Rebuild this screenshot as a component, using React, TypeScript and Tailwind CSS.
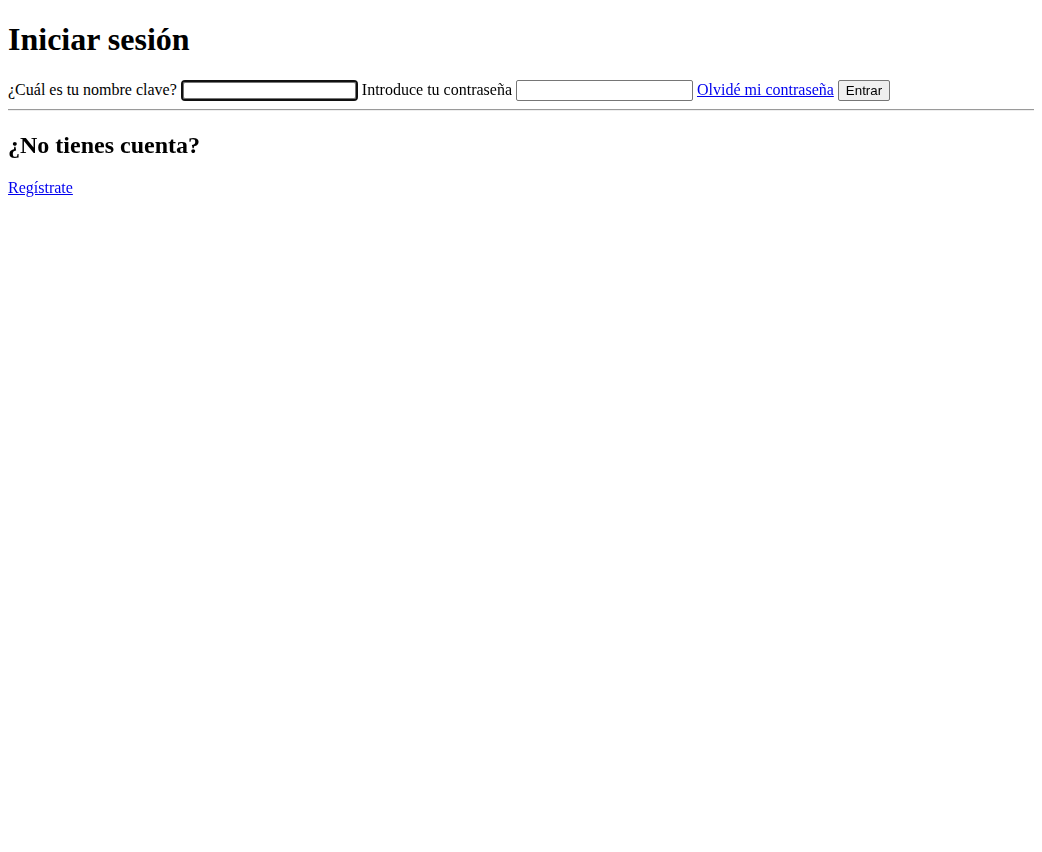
import { useEffect, useRef } from "react";

export default function App() {
  const nameRef = useRef<HTMLInputElement>(null);

  useEffect(() => {
    nameRef.current?.focus();
  }, []);

  return (
    <div className="p-2 font-['Liberation_Serif',serif] text-base leading-[normal] text-black bg-white min-h-screen">
      <h1 className="text-[32px] font-bold mt-[12.5px] mb-[22px]">Iniciar sesión</h1>

      <form className="flex flex-wrap items-center gap-x-1" onSubmit={(e) => e.preventDefault()}>
        <label htmlFor="nombre">¿Cuál es tu nombre clave?</label>
        <input
          id="nombre"
          ref={nameRef}
          type="text"
          className="mx-[2px] w-[173px] h-[17px] px-[2px] border border-[#767676] rounded-[2px] bg-white font-['Liberation_Sans',sans-serif] text-[13.33px] outline-2 outline-[#101010] outline-offset-0 caret-black"
        />
        <label htmlFor="clave">Introduce tu contraseña</label>
        <input
          id="clave"
          type="password"
          className="w-[177px] h-[21px] px-[2px] border border-[#767676] rounded-[2px] bg-white font-['Liberation_Sans',sans-serif] text-[13.33px]"
        />
        <a href="#" className="text-[#0000ee] underline">
          Olvidé mi contraseña
        </a>
        <button
          type="submit"
          className="h-[21px] px-[7px] border border-[#767676] rounded-[2px] bg-[#efefef] font-['Liberation_Sans',sans-serif] text-[13.33px] text-black"
        >
          Entrar
        </button>
      </form>

      <hr className="my-2 h-0 border-t border-t-[#9a9a9a] border-b border-b-[#eeeeee]" />

      <h2 className="text-2xl font-bold mt-[18px] mb-[18.5px]">¿No tienes cuenta?</h2>
      <p>
        <a href="#" className="text-[#0000ee] underline">
          Regístrate
        </a>
      </p>
    </div>
  );
}
